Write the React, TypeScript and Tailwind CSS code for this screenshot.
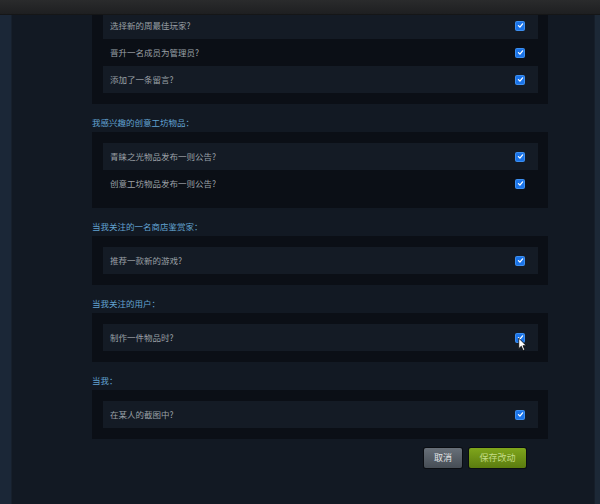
import React from 'react'

type Section = {
    title?: string;
    items: string[];
}

const sections: Section[] = [
    { items: ['选择新的周最佳玩家?', '晋升一名成员为管理员?', '添加了一条留言?'] },
    { title: '我感兴趣的创意工坊物品：', items: ['青睐之光物品发布一则公告?', '创意工坊物品发布一则公告?'] },
    { title: '当我关注的一名商店鉴赏家：', items: ['推荐一款新的游戏?'] },
    { title: '当我关注的用户：', items: ['制作一件物品时?'] },
    { title: '当我：', items: ['在某人的截图中?'] },
]

const font = { fontFamily: '"Noto Sans CJK SC", "Noto Sans", sans-serif' }

function Check({ cursor }: { cursor?: boolean }) {
    return (
        <span className="relative flex h-[8px] w-[8px] items-center justify-center rounded-[1px] bg-[#1a73e8] shadow-[0_0_0_1px_#3d8ff0]">
            <svg viewBox="0 0 10 10" className="h-[7px] w-[7px]">
                <path d="M2 5.2 L4.2 7.3 L8 2.6" fill="none" stroke="#fff" strokeWidth="1.8" strokeLinecap="round" strokeLinejoin="round" />
            </svg>
            {cursor && (
                <svg viewBox="0 0 12 19" className="absolute left-[2px] top-[3px] h-[15px] w-[9px]">
                    <path d="M1 1 L1 15 L4.4 11.8 L6.8 17.5 L9 16.5 L6.7 11 L11 11 Z" fill="#fff" stroke="#000" strokeWidth="1" strokeLinejoin="round" />
                </svg>
            )}
        </span>
    )
}

export default function App() {
    return (
        <div className="flex h-[504px] w-[600px] flex-col overflow-hidden bg-[#121923]" style={font}>
            <div className="relative z-10 h-[15px] shrink-0 bg-gradient-to-b from-[#2a2b2c] to-[#1e1f21] border-b border-[#151617]" />
            <div className="flex flex-1 overflow-hidden">
                <div className="w-[12px] shrink-0 bg-[#1b2737] border-r border-[#17202c]" />
                <div className="flex-1 pl-[80px] pr-[46px]">
                    <div className="-mt-[14px] flex flex-col">
                        {sections.map((s, i) => (
                            <div key={i}>
                                {s.title && (
                                    <div className="flex h-[28px] items-end pb-[2px] text-[8.5px] leading-[16px] text-[#62a3d2]">
                                        {s.title}
                                    </div>
                                )}
                                <div className="bg-[#0b0f16] pt-[11px] pb-[11px] pl-[11px] pr-[10px]">
                                    {s.items.map((item, j) => (
                                        <div
                                            key={item}
                                            className={`flex h-[27px] items-center justify-between pl-[7px] pr-[14px] ${j % 2 === 0 ? 'bg-[#141b25]' : ''}`}
                                        >
                                            <span className="text-[8.5px] text-[#9ba0a6]">{item}</span>
                                            <Check cursor={item === '制作一件物品时?'} />
                                        </div>
                                    ))}
                                </div>
                            </div>
                        ))}
                        <div className="mt-[9px] flex justify-end gap-[7px] pr-[22px]">
                            <button className="flex h-[20px] w-[38px] items-center justify-center rounded-[2px] bg-gradient-to-b from-[#687079] to-[#464d55] text-[9px] text-[#e2e4e6] shadow-[0_0_0_1px_#0a0d12]">
                                取消
                            </button>
                            <button className="flex h-[20px] w-[57px] items-center justify-center rounded-[2px] bg-gradient-to-b from-[#7fa61c] to-[#5b7c0f] text-[9px] text-[#c3dc86] shadow-[0_0_0_1px_#0a0d12]">
                                保存改动
                            </button>
                        </div>
                    </div>
                </div>
                <div className="w-[6px] shrink-0 bg-[#1c2836] border-l border-[#161e29]" />
            </div>
        </div>
    )
}
